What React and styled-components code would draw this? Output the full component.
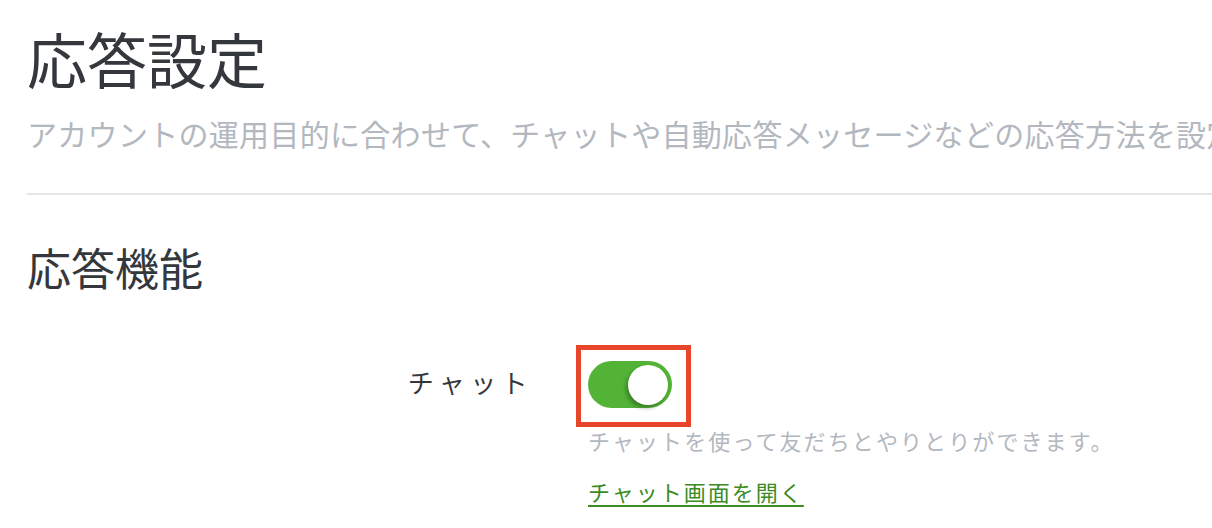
import React, { useState } from "react";
import styled, { createGlobalStyle } from "styled-components";

const GlobalStyle = createGlobalStyle`
  html, body {
    margin: 0;
    padding: 0;
    background: #fff;
    overflow: hidden;
  }
  body {
    font-family: "Noto Sans CJK JP", "Noto Sans", sans-serif;
    color: #34383d;
  }
`;

const Page = styled.div`
  width: 1212px;
  height: 528px;
  padding: 28px 0 0 27px;
  box-sizing: border-box;
  overflow: hidden;
`;

const Title = styled.h1`
  margin: 0;
  font-size: 60px;
  line-height: 1;
  font-weight: 400;
  color: #34383d;
`;

const Lead = styled.p`
  margin: 30px 0 0;
  font-size: 30px;
  line-height: 1;
  letter-spacing: 0.3px;
  color: #b3b8bf;
  white-space: nowrap;
`;

const Divider = styled.hr`
  margin: 45px 0 0;
  border: none;
  height: 2px;
  background: #e6e6e6;
`;

const SectionTitle = styled.h2`
  margin: 50px 0 0;
  font-size: 44px;
  line-height: 1;
  font-weight: 400;
  color: #34383d;
`;

const Row = styled.div`
  display: grid;
  grid-template-columns: 506px 1fr;
  column-gap: 55px;
  margin-top: 72px;
`;

const Label = styled.div`
  text-align: right;
  font-size: 26px;
  letter-spacing: 5.4px;
  line-height: 41px;
  height: 47px;
  color: #34383d;
`;

const Control = styled.div`
  display: flex;
  flex-direction: column;
  align-items: flex-start;
`;

const Highlight = styled.div`
  position: relative;
  &::after {
    content: "";
    position: absolute;
    left: -12px;
    top: -16px;
    right: -19px;
    bottom: -19px;
    border: 5px solid #e8462b;
    pointer-events: none;
  }
`;

const Switch = styled.button`
  position: relative;
  width: 84px;
  height: 47px;
  padding: 0;
  border: none;
  border-radius: 24px;
  background: ${(p) => (p.$on ? "#52b336" : "#d5d8dc")};
  cursor: pointer;
  display: block;
`;

const Knob = styled.span`
  position: absolute;
  top: 4px;
  left: ${(p) => (p.$on ? "40px" : "3px")};
  width: 40px;
  height: 40px;
  border-radius: 50%;
  background: #fff;
  box-shadow: -2px 3px 4px rgba(0, 0, 0, 0.3);
`;

const Help = styled.p`
  margin: 21px 0 0;
  font-size: 22px;
  line-height: 1;
  letter-spacing: 2.1px;
  color: #b3b8bf;
`;

const Link = styled.a`
  margin-top: 29px;
  font-size: 22px;
  line-height: 1;
  letter-spacing: 2px;
  color: #3c8b23;
  text-decoration: underline;
  text-underline-offset: 4px;
  text-decoration-thickness: 2px;
`;

export default function App() {
  const [chat, setChat] = useState(true);

  return (
    <Page>
      <GlobalStyle />
      <Title>応答設定</Title>
      <Lead>
        アカウントの運用目的に合わせて、チャットや自動応答メッセージなどの応答方法を設定してください。
      </Lead>
      <Divider />
      <SectionTitle>応答機能</SectionTitle>
      <Row>
        <Label>チャット</Label>
        <Control>
          <Highlight>
            <Switch $on={chat} onClick={() => setChat(!chat)}>
              <Knob $on={chat} />
            </Switch>
          </Highlight>
          <Help>チャットを使って友だちとやりとりができます。</Help>
          <Link href="#">チャット画面を開く</Link>
        </Control>
      </Row>
    </Page>
  );
}
